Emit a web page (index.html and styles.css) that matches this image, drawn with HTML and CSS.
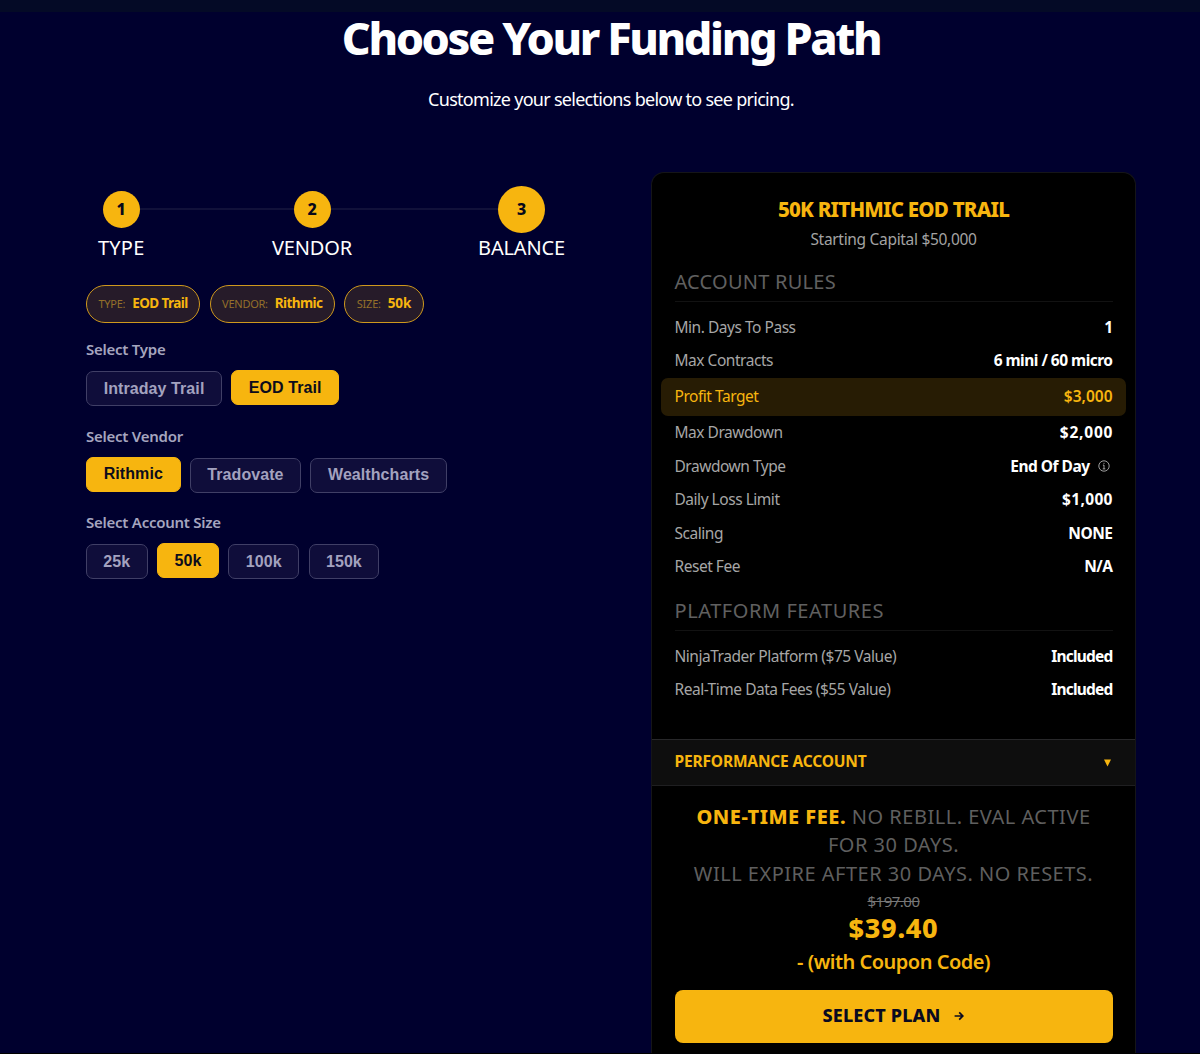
FILE: index.html
```
<!DOCTYPE html>
<html lang="en">
<head>
<meta charset="utf-8">
<title>Choose Your Funding Path</title>
<link rel="stylesheet" href="styles.css">
</head>
<body>
<div class="topbar"></div>
<main>
  <h1>Choose Your Funding Path</h1>
  <p class="lead">Customize your selections below to see pricing.</p>
  <div class="columns">
    <section class="selector">
      <div class="steps">
        <div class="step"><span class="dot">1</span><span class="step-name">TYPE</span></div>
        <div class="step"><span class="dot">2</span><span class="step-name">VENDOR</span></div>
        <div class="step"><span class="dot current">3</span><span class="step-name">BALANCE</span></div>
      </div>
      <div class="pills">
        <div class="pill"><span class="key">TYPE:</span><b>EOD Trail</b></div>
        <div class="pill"><span class="key">VENDOR:</span><b>Rithmic</b></div>
        <div class="pill"><span class="key">SIZE:</span><b class="wide">50k</b></div>
      </div>
      <div class="group">
        <h2>Select Type</h2>
        <div class="options"><button>Intraday Trail</button><button class="active">EOD Trail</button></div>
      </div>
      <div class="group">
        <h2>Select Vendor</h2>
        <div class="options"><button class="active">Rithmic</button><button>Tradovate</button><button>Wealthcharts</button></div>
      </div>
      <div class="group">
        <h2>Select Account Size</h2>
        <div class="options sizes"><button>25k</button><button class="active">50k</button><button>100k</button><button>150k</button></div>
      </div>
    </section>
    <aside class="card">
      <div class="card-body">
        <h3>50K RITHMIC EOD TRAIL</h3>
        <p class="capital">Starting Capital $50,000</p>
        <h4>ACCOUNT RULES</h4>
        <dl>
          <div class="row"><dt>Min. Days To Pass</dt><dd>1</dd></div>
          <div class="row"><dt>Max Contracts</dt><dd>6 mini / 60 micro</dd></div>
          <div class="row highlight"><dt>Profit Target</dt><dd class="money">$3,000</dd></div>
          <div class="row"><dt>Max Drawdown</dt><dd class="money">$2,000</dd></div>
          <div class="row"><dt>Drawdown Type</dt><dd>End Of Day
            <svg class="info" viewBox="0 0 12 12"><circle cx="6" cy="6" r="5.2"/><path d="M6 5v3.9M4.9 5.1H6M4.7 8.9h2.6M6 2.8v1.1"/></svg></dd></div>
          <div class="row"><dt>Daily Loss Limit</dt><dd class="money one">$1,000</dd></div>
          <div class="row"><dt>Scaling</dt><dd class="caps">NONE</dd></div>
          <div class="row"><dt>Reset Fee</dt><dd class="caps">N/A</dd></div>
        </dl>
        <h4 class="features">PLATFORM FEATURES</h4>
        <dl>
          <div class="row"><dt>NinjaTrader Platform ($75 Value)</dt><dd class="tight">Included</dd></div>
          <div class="row"><dt>Real-Time Data Fees ($55 Value)</dt><dd class="tight">Included</dd></div>
        </dl>
      </div>
      <div class="accordion"><span>PERFORMANCE ACCOUNT</span>
        <svg class="caret" viewBox="0 0 7 8"><path d="M0 .5h7L3.5 7.5z"/></svg></div>
      <div class="checkout">
        <p class="terms"><strong>ONE-TIME FEE.</strong> NO REBILL. EVAL ACTIVE<br>FOR 30 DAYS.</p>
        <p class="terms last">WILL EXPIRE AFTER 30 DAYS. NO RESETS.</p>
        <p class="old-price">$197.00</p>
        <p class="price">$39.40</p>
        <p class="coupon">- (with Coupon Code)</p>
        <a class="cta">SELECT PLAN
          <svg class="arrow" viewBox="0 0 10 10"><path d="M.6 5h8M5.2 1.4 8.8 5 5.2 8.6"/></svg></a>
      </div>
    </aside>
  </div>
</main>
</body>
</html>
```

FILE: styles.css
```
* { box-sizing: border-box; }
body {
  margin: 0;
  height: 1054px;
  overflow: hidden;
  background: #00002e;
  border-bottom: 1px solid #000;
  color: #fff;
  font-family: "Noto Sans", "Open Sans", sans-serif;
}
h1, h2, h3, h4, p, dl, dd { margin: 0; }
.topbar { height: 12px; background: #040a26; }
main { height: 1041px; }
h1 {
  margin: -5px 0 0 22px;
  text-align: center;
  font-size: 45px;
  line-height: 62px;
  font-weight: 800;
  letter-spacing: -2.4px;
}
.lead {
  margin: 18px 0 0 22px;
  text-align: center;
  font-size: 18px;
  line-height: 24px;
  letter-spacing: -0.72px;
}
.columns {
  display: flex;
  justify-content: space-between;
  margin-top: 61px;
  padding: 0 64px 0 86px;
}
.selector { width: 491px; padding-top: 14px; }
.steps {
  position: relative;
  display: flex;
  justify-content: space-between;
  padding: 0 12px;
}
.steps::before {
  content: "";
  position: absolute;
  left: 36px;
  right: 56px;
  top: 22px;
  height: 2px;
  background: #11113a;
}
.step { display: flex; flex-direction: column; align-items: center; position: relative; }
.dot {
  width: 37px;
  height: 37px;
  margin: 5px 0;
  padding-bottom: 2px;
  border-radius: 50%;
  background: #f7b50f;
  color: #08081a;
  display: flex;
  align-items: center;
  justify-content: center;
  font-size: 16px;
  font-weight: 800;
}
.dot.current { width: 47px; height: 47px; margin: 0; }
.step-name { font-size: 20px; line-height: 28px; letter-spacing: -0.15px; padding-top: 1px; }
.step:first-child .step-name { letter-spacing: 0.2px; }
.step:nth-child(2) { left: 0.8px; }
.pills { display: flex; gap: 9.5px; margin-top: 23px; }
.pill {
  display: flex;
  align-items: center;
  gap: 7px;
  height: 38px;
  padding: 0 11.5px 2px;
  border: 1px solid #cf991d;
  border-radius: 19px;
  background: #261b29;
  color: #f7b50f;
  font-size: 13.5px;
  letter-spacing: -0.6px;
}
.pill .key { font-size: 11px; letter-spacing: -0.25px; color: #94702a; }
.pill .wide { letter-spacing: -0.1px; }
.group { margin-top: 15px; height: 71.7px; }
h2 {
  color: #a5a5bf;
  font-size: 15px;
  line-height: 22px;
  font-weight: 600;
  letter-spacing: -0.25px;
}
.options { display: flex; gap: 9px; margin-top: 11px; }
.options.sizes { gap: 9.7px; }
button {
  height: 35px;
  padding: 0 16.7px;
  border: 1px solid #403f66;
  border-radius: 7px;
  background: #0f0d3a;
  color: #a3a2bf;
  font: 700 16px "Liberation Sans", Arial, sans-serif;
  letter-spacing: 0.08px;
}
.sizes button { padding: 0 16.3px; }
button.active {
  transform: translateY(-1px);
  border-color: #f7b50f;
  background: #f7b50f;
  color: #0c0c1c;
}
.card {
  width: 485px;
  height: 881px;
  border: 1px solid #151518;
  border-bottom: 0;
  border-radius: 13px 13px 0 0;
  background: #000;
}
.card-body { height: 566px; padding: 22px 22.5px 0; }
h3 {
  text-align: center;
  color: #f7b50f;
  font-size: 20.5px;
  line-height: 28px;
  font-weight: 800;
  letter-spacing: -0.78px;
}
.capital {
  margin-top: 5px;
  text-align: center;
  color: #a3a3a3;
  font-size: 15.5px;
  line-height: 22px;
  letter-spacing: -0.31px;
}
h4 {
  margin-top: 17px;
  height: 34.5px;
  border-bottom: 1px solid #121212;
  color: #606060;
  font-size: 20px;
  line-height: 30px;
  font-weight: 400;
  letter-spacing: 0.24px;
}
h4.features { margin-top: 13px; letter-spacing: 0.56px; }
dl { padding-top: 8.5px; }
.row {
  display: flex;
  justify-content: space-between;
  align-items: center;
  height: 33.5px;
  color: #a6a6a6;
  font-size: 15.5px;
  letter-spacing: -0.47px;
}
dd { display: flex; align-items: center; color: #fff; font-weight: 700; letter-spacing: -0.52px; }
dd.money { letter-spacing: 0.8px; margin-right: -0.8px; }
dd.one { letter-spacing: 0.35px; margin-right: -0.35px; }
dd.caps { letter-spacing: -0.5px; }
dd.tight { letter-spacing: -0.8px; }
.row.highlight {
  height: 37.5px;
  margin: 1px -13.5px 0;
  padding: 0 13.5px 1px;
  border-radius: 7px;
  background: #271c04;
  color: #f7b50f;
}
.row.highlight dd { color: #f7b50f; font-weight: 600; letter-spacing: 0; margin-right: 0; }
.info {
  width: 12px;
  height: 12px;
  margin: 0 3px 0 8px;
  fill: none;
  stroke: #c4c4c4;
  stroke-width: 0.8;
}
.accordion {
  display: flex;
  align-items: center;
  justify-content: space-between;
  height: 47px;
  padding: 0 23px 3px 22.5px;
  border-top: 1px solid #28282a;
  border-bottom: 1px solid #1f1f21;
  background: #0e0e0e;
  color: #f7b50f;
  font-size: 15.5px;
  font-weight: 700;
  letter-spacing: -0.17px;
}
.caret { width: 7px; height: 8px; margin-right: 1px; margin-top: 3px; fill: #f7b50f; }
.checkout { padding: 17px 22.5px 0; text-align: center; }
.terms {
  color: #5f5f5f;
  font-size: 20px;
  line-height: 27.5px;
  letter-spacing: 0.5px;
}
.terms.last { margin-top: 2px; }
.terms strong { color: #f7b50f; font-weight: 800; }
.old-price {
  color: #777;
  font-size: 15px;
  line-height: 26px;
  letter-spacing: -0.5px;
  text-decoration: line-through;
}
.price {
  color: #f7b50f;
  font-size: 27px;
  line-height: 28px;
  font-weight: 800;
  letter-spacing: 0.7px;
}
.coupon {
  margin-top: 5px;
  color: #f7b50f;
  font-size: 20px;
  line-height: 30px;
  font-weight: 600;
  letter-spacing: -0.5px;
}
.cta {
  display: flex;
  align-items: center;
  justify-content: center;
  gap: 14px;
  height: 52.5px;
  margin-top: 13.5px;
  padding-bottom: 2px;
  border-radius: 8px;
  background: #f7b50f;
  color: #0a0a20;
  font-size: 18px;
  font-weight: 800;
  letter-spacing: 0.15px;
}
.arrow { width: 10px; height: 10px; margin-top: 2px; fill: none; stroke: #0a0a20; stroke-width: 1.7; }
```
